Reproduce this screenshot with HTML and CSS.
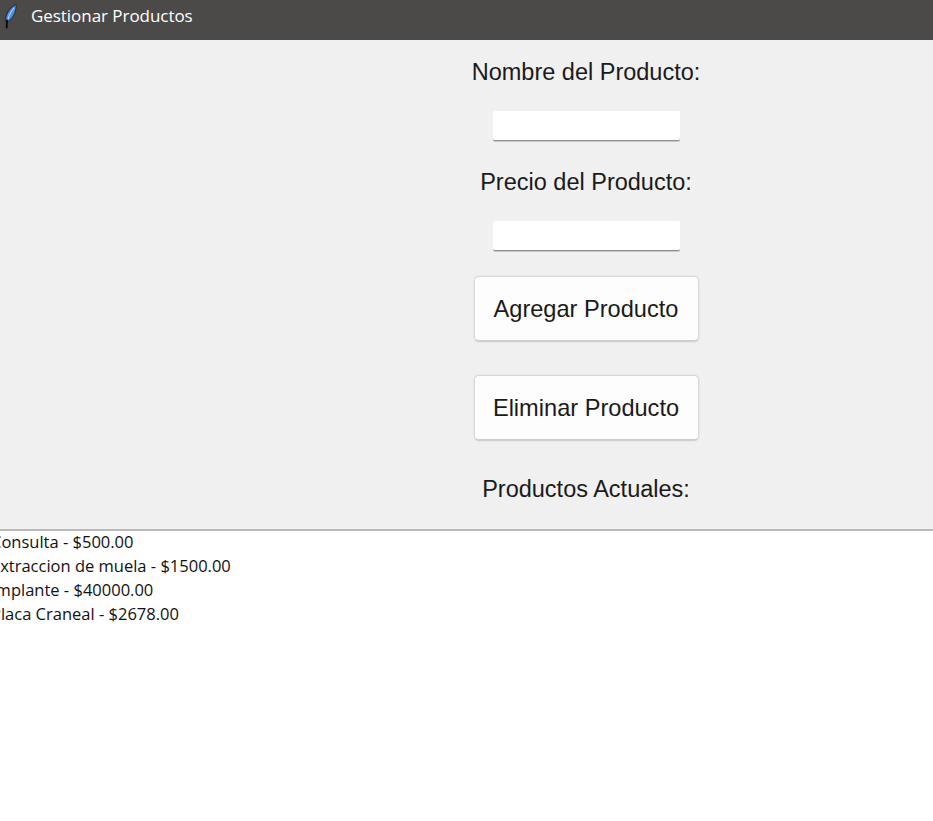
FILE: index.html
```html
<!DOCTYPE html>
<html lang="es">
<head>
<meta charset="utf-8">
<title>Gestionar Productos</title>
<link rel="stylesheet" href="styles.css">
</head>
<body>
<header class="titlebar">
  <svg class="feather" width="16" height="26" viewBox="0 0 16 26" aria-hidden="true">
    <path d="M13.500 1C9 2 4.500 7 2.500 12.500 1.500 15.500 1.500 18 3 20.500 7.500 18.500 11 13.500 12.800 8.500 13.700 6 14 3.500 13.500 1z" fill="#2b3442"/>
    <path d="M12.700 2.500C9 3.800 5.500 8 3.800 13c-.7 2.300-.7 4 .1 5.800 3.300-1.700 6.300-5.800 7.800-10.300 .6-2 1-4 1-6z" fill="#4f8fe6"/>
    <path d="M11 5C8.500 8 6.300 11.500 5 16" stroke="#c3dbf8" stroke-width="1" fill="none"/>
    <path d="M4 17.500L3.700 24.500" stroke="#0a0a0a" stroke-width="1.800" fill="none" stroke-linecap="round"/>
  </svg>
  <span class="title">Gestionar Productos</span>
</header>
<main class="form">
  <label class="label label-first" for="nombre">Nombre del Producto:</label>
  <input class="field" id="nombre" type="text">
  <label class="label" for="precio">Precio del Producto:</label>
  <input class="field field-last" id="precio" type="text">
  <button class="btn btn-first" type="button">Agregar Producto</button>
  <button class="btn" type="button">Eliminar Producto</button>
  <p class="label label-list">Productos Actuales:</p>
</main>
<ul class="list">
  <li>Consulta - $500.00</li>
  <li>Extraccion de muela - $1500.00</li>
  <li>Implante - $40000.00</li>
  <li>Placa Craneal - $2678.00</li>
</ul>
</body>
</html>
```
FILE: styles.css
```css
* { box-sizing: border-box; }
html, body { height: 100%; }
body {
  margin: 0;
  display: flex;
  flex-direction: column;
  overflow: hidden;
  background: #fff;
  font-family: "Liberation Sans", Arial, sans-serif;
}
.titlebar {
  height: 40px;
  flex: none;
  display: flex;
  align-items: center;
  padding: 0 0 8px 3px;
  background: #4c4a48;
  color: #fff;
}
.feather { flex: none; }
.title {
  margin-left: 12px;
  font: 17px/20px "Open Sans", "Noto Sans", sans-serif;
  letter-spacing: -0.05px;
}
.form {
  height: 491px;
  flex: none;
  display: flex;
  flex-direction: column;
  align-items: center;
  padding-left: 239px;
  background: #f0f0f0;
  border-bottom: 2px solid #b9b9b9;
}
.label {
  margin: 0;
  font-size: 23.5px;
  line-height: 28px;
  color: #1a1a1a;
}
.label-first { margin-top: 18px; }
.field {
  display: block;
  width: 187px;
  height: 30px;
  margin: 25px 0 27px;
  padding: 0;
  border: 0;
  border-bottom: 1px solid #8f8f8f;
  border-radius: 2px;
  background: #fff;
  box-shadow: 0 1px 0 #c9c9c9;
}
.field-last { margin-bottom: 0; }
.btn {
  display: block;
  width: 225px;
  height: 66px;
  margin-top: 33px;
  padding: 0;
  border: 1px solid #d8d8d8;
  border-bottom: 2px solid #cfcfcf;
  border-radius: 5px;
  background: #fdfdfd;
  box-shadow: 0 0 0 1px #e8e8e8;
  color: #1a1a1a;
  font: 23.6px/30px "Liberation Sans", Arial, sans-serif;
}
.btn-first { margin-top: 25px; }
.label-list { margin-top: 34px; }
.list {
  margin: -1px 0 0 -9px;
  padding: 0;
  list-style: none;
  font: 16.5px/24px "Open Sans", "Noto Sans", sans-serif;
  color: #111;
}
```
